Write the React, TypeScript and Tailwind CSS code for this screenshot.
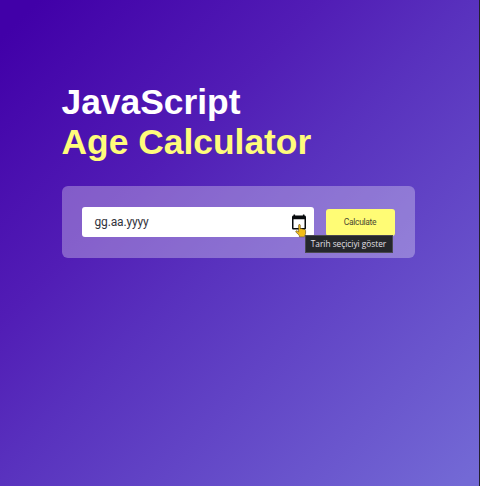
function CalendarIcon() {
  return (
    <svg viewBox="0 0 14 16" className="block h-4 w-3.5" aria-hidden="true">
      <path
        fill="#080b0d"
        fillRule="evenodd"
        d="M1.6 0.4h1.5v1h7.8v-1h1.5v1c.9 0 1.6.7 1.6 1.6v11c0 .9-.7 1.6-1.6 1.6H1.6C.7 15.6 0 14.9 0 14V3c0-.9.7-1.6 1.6-1.6zM1.5 5.2v8.9h11V5.2z"
      />
    </svg>
  );
}

function HandCursor() {
  return (
    <svg viewBox="0 0 12 14" className="block h-[14px] w-3" aria-hidden="true">
      <path
        fill="#f3bd18"
        stroke="#5d4314"
        strokeWidth="0.6"
        strokeLinejoin="round"
        d="M3.6 1.2c0-1 1.7-1 1.7 0v3.7c.5-.5 1.5-.4 1.8.2.6-.4 1.4-.2 1.7.4.8-.3 1.8.2 1.8 1.2v2.5c0 1.1-.6 1.7-1 2.3v1.3H4.4v-1.2C3.2 10.7 2.5 9.5 1 8.1c-.7-.9.3-1.7 1.2-1.1l1.4 1z"
      />
    </svg>
  );
}

export default function App() {
  return (
    <main className="h-[486px] w-[480px] overflow-hidden border-r border-[#24202f] bg-[linear-gradient(135deg,#4100a8_4%,#511cb5_33%,#5932be_50%,#7369d5_98%)] pl-[61.5px] pt-[81.5px]">
      <h1 className="flex flex-col font-['Liberation_Sans',Arial,sans-serif] text-[35.4px] font-bold leading-[40.7px]">
        <span className="text-white">JavaScript</span>
        <span className="text-[#fffc7b]">Age Calculator</span>
      </h1>

      <section className="mt-[23.3px] flex h-[71.5px] w-[353.5px] items-center gap-[11.5px] rounded-md bg-white/30 px-[20.5px]">
        <div className="flex h-[30px] w-[233px] items-center justify-between rounded-[3px] bg-white pl-[12.5px] pr-2">
          <span className="font-['Roboto',sans-serif] text-[12px] leading-4 tracking-[-0.15px] text-[#32343c]">gg.aa.yyyy</span>
          <div className="relative">
            <CalendarIcon />
            <div className="absolute left-[2.5px] top-[10px] z-10">
              <HandCursor />
            </div>
          </div>
        </div>

        <div className="relative">
          <button className="mt-px block h-[27px] w-[69px] rounded-[3px] bg-[#fffc75] font-['Roboto',sans-serif] text-[8.5px] tracking-[-0.3px] text-[#4b4932]">
            Calculate
          </button>
          <div
            role="tooltip"
            className="absolute left-[-21px] top-[27.5px] flex h-[18px] w-[88px] items-center justify-center whitespace-nowrap border border-[#4a4850] bg-[#25272b] font-['Open_Sans','Noto_Sans',sans-serif] text-[8.3px] leading-none text-[#e1e0e5]"
          >
            Tarih seçiciyi göster
          </div>
        </div>
      </section>
    </main>
  );
}
